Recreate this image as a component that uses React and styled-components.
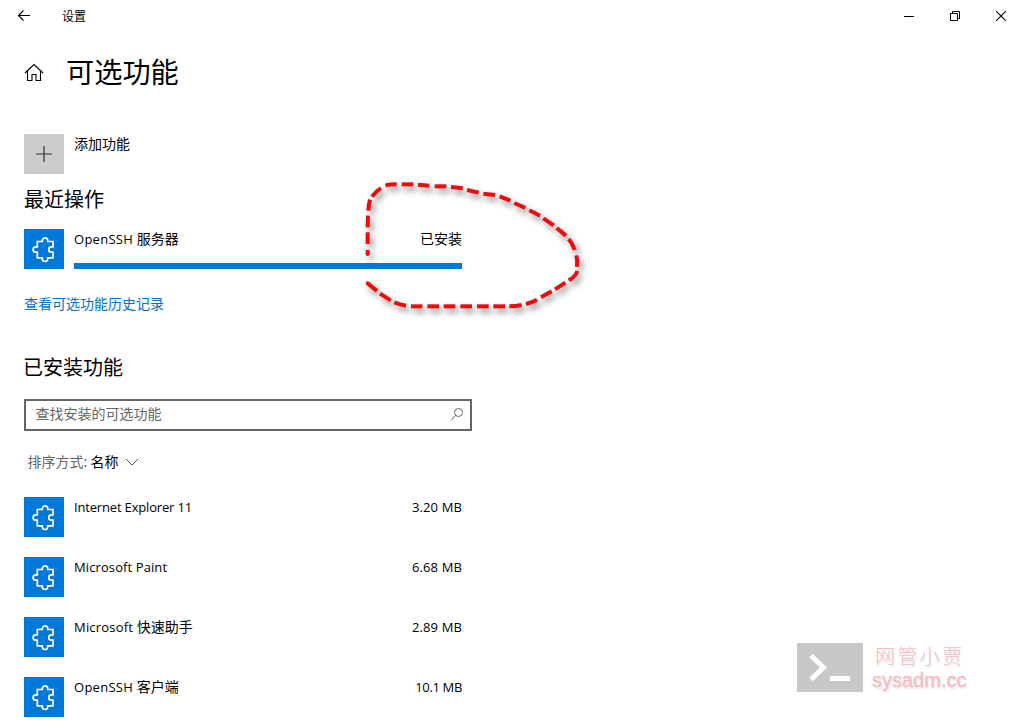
import React from 'react';
import styled, { createGlobalStyle } from 'styled-components';

const Global = createGlobalStyle`
  * { box-sizing: border-box; }
  body { margin: 0; background: #fff; color: #000; overflow: hidden;
    font-family: "Noto Sans CJK SC", sans-serif; }
`;
const Window = styled.div`
  position: relative; width: 1024px; height: 728px; overflow: hidden; background: #fff;
`;
const TitleBar = styled.header`
  display: flex; align-items: center; height: 32px; padding-left: 17px;
`;
const WindowTitle = styled.span`
  font-size: 12px; line-height: 32px; margin-left: 31px; flex: 1;
`;
const WindowButton = styled.span`
  width: 46px; height: 32px; display: flex; align-items: center; justify-content: center;
`;
const Heading = styled.div`
  display: flex; align-items: center; height: 80px; padding-left: 24px;
`;
const PageTitle = styled.h1`
  margin: 0 0 2px 22px; font-size: 28.2px; line-height: 40px; font-weight: 400;
`;
const Content = styled.main`
  width: 472px; padding: 22px 0 0 24px;
`;
const SectionTitle = styled.h2`
  margin: 0 0 0 ${p => p.$shift || 0}px; font-size: 20px; font-weight: 400; line-height: 30px;
  height: ${p => p.$height}px;
`;
const Row = styled.div`
  display: flex; height: ${p => p.$height || 60}px; padding-right: 10px;
`;
const Tile = styled.div`
  width: 40px; height: 40px; flex: none; background: ${p => p.$bg};
  svg { display: block; }
`;
const Details = styled.div`
  flex: 1; margin-left: 10px;
`;
const Line = styled.div`
  display: flex; justify-content: space-between; font-size: 14px; line-height: 18px; height: 20px;
  white-space: pre;
`;
const Latin = styled.span`
  font-family: "Open Sans", "Noto Sans", sans-serif; font-size: 13px; letter-spacing: ${p => p.$track || 0}px;
`;
const Progress = styled.div`
  height: 6px; margin-top: 14px; background: #0078d7;
`;
const HistoryLink = styled.a`
  display: block; font-size: 14px; line-height: 18px; height: 58px; color: #0070c8;
`;
const SearchBox = styled.div`
  display: flex; align-items: center; justify-content: space-between; width: 448px; height: 32px;
  border: 2px solid #666; padding: 0 7px 2px 9.5px; font-size: 14px; line-height: 20px; color: #666;
`;
const SearchText = styled.span`
  padding-bottom: 2px;
`;
const Sort = styled.div`
  display: flex; align-items: center; height: 66px; padding: 0 0 6px 3.5px; font-size: 14px; color: #666;
  white-space: pre;
  svg { margin-top: 2px; }
`;
const SortValue = styled.span`
  color: #000; margin: 0 8px 0 3px;
`;
const Annotation = styled.svg`
  position: absolute; left: 350px; top: 170px; overflow: visible;
  filter: drop-shadow(3px 4px 3px rgba(0,0,0,.5));
`;
const Watermark = styled.div`
  position: absolute; left: 797px; top: 643px; display: flex;
`;
const WatermarkText = styled.div`
  margin-left: 9px; color: #f5bcbe; text-shadow: 1px 2px 2px rgba(0,0,0,.12);
`;
const WatermarkName = styled.div`
  font-size: 20px; line-height: 26px; letter-spacing: 2.4px; margin-left: 3px; white-space: nowrap;
  font-weight: 300;
`;
const WatermarkSite = styled.div`
  font-family: "Liberation Sans", sans-serif; font-size: 20px; line-height: 22px; -webkit-text-stroke: .3px #f5bcbe;
`;

const PuzzleTile = () => (
  <Tile $bg="#0078d7">
    <svg width="40" height="40" fill="none" stroke="#fff" strokeWidth="1.7">
      <path d="M13.3 12.5H18.3V11.5A2.7 2.7 0 0 1 23.7 11.5V12.5H29V17.8H27.4A2.7 2.7 0 0 0 27.4 23.2H29V28.8H23.7V29.8A2.7 2.7 0 0 1 18.3 29.8V28.8H13.3V23.2H11.8A2.7 2.7 0 0 1 11.8 17.8H13.3Z" />
    </svg>
  </Tile>
);

const features = [
  { latin: 'Internet Explorer 11', track: -0.17, size: '3.20 MB', sizeTrack: 0.12 },
  { latin: 'Microsoft Paint', track: 0.1, size: '6.68 MB', sizeTrack: 0.12 },
  { latin: 'Microsoft ', track: 0.2, cjk: '快速助手', size: '2.89 MB', sizeTrack: 0.12 },
  { latin: 'OpenSSH ', track: 0.27, cjk: '客户端', size: '10.1 MB', sizeTrack: -0.35 },
];

const dashes = [
  'M53 253V240', 'M53 222V187', 'M53 172L54 137', 'M55 122Q56 103 60 89', 'M66 80Q77 64 93 55',
  'M106 46Q120 43 140 43', 'M155 43H190', 'M204 44L238 47', 'M254 49L289 49', 'M303 51L338 55',
  'M351 60L386 68', 'M400 71L435 75', 'M449 79L481 92', 'M493 99L526 114', 'M538 121L570 137',
  'M580 145L611 166', 'M620 174L648 197', 'M656 207Q668 221 674 240', 'M679 256Q683 273 681 290',
  'M682 303Q677 320 656 331', 'M646 338L615 358', 'M605 364L573 382', 'M561 389Q545 398 528 402',
  'M515 405Q498 409 478 409', 'M465 409H430', 'M416 409H381', 'M366 409H331', 'M316 409H281',
  'M267 409H232', 'M217 409H183', 'M168 407Q150 404 133 397', 'M122 391L90 371', 'M81 363L53 340',
];

export default function App() {
  return (
    <Window>
      <Global />
      <TitleBar>
        <svg width="14" height="32" fill="none" stroke="#000" strokeWidth="1.1"><path d="M1.5 15.5H13M6.5 10.5L1.5 15.5L6.5 20.5" /></svg>
        <WindowTitle>设置</WindowTitle>
        <WindowButton><svg width="10" height="10" stroke="#000"><path d="M0 5.5H10" /></svg></WindowButton>
        <WindowButton><svg width="10" height="10" fill="none" stroke="#000"><path d="M.5 2.5H7.5V9.5H.5ZM2.5 2.5V.5H9.5V7.5H7.5" /></svg></WindowButton>
        <WindowButton><svg width="10" height="10" stroke="#000" strokeWidth="1.1"><path d="M0 0L10 10M10 0L0 10" /></svg></WindowButton>
      </TitleBar>
      <Heading>
        <svg width="20" height="20" fill="none" stroke="#000" strokeWidth="1.1"><path d="M1 11L10 2.5L19 11M3.5 9V18.5H8V12.5H12V18.5H16.5V9" /></svg>
        <PageTitle>可选功能</PageTitle>
      </Heading>
      <Content>
        <Row $height={50}>
          <Tile $bg="#ccc"><svg width="40" height="40" stroke="#333" strokeWidth="1.2"><path d="M12 20H28M20 12V28" /></svg></Tile>
          <Details><Line>添加功能</Line></Details>
        </Row>
        <SectionTitle $height={45}>最近操作</SectionTitle>
        <Row $height={65}>
          <PuzzleTile />
          <Details>
            <Line><span><Latin $track={0.27}>OpenSSH </Latin>服务器</span><span>已安装</span></Line>
            <Progress />
          </Details>
        </Row>
        <HistoryLink>查看可选功能历史记录</HistoryLink>
        <SectionTitle $height={47} $shift={-1}>已安装功能</SectionTitle>
        <SearchBox>
          <SearchText>查找安装的可选功能</SearchText>
          <svg width="12" height="14" fill="none" stroke="#666"><circle cx="7.5" cy="5.5" r="4" /><path d="M4.6 8.3L0 13.5" /></svg>
        </SearchBox>
        <Sort>
          排序方式:<SortValue>名称</SortValue>
          <svg width="12" height="8" fill="none" stroke="#555"><path d="M0 1L6 7L12 1" /></svg>
        </Sort>
        {features.map(f => (
          <Row key={f.latin}>
            <PuzzleTile />
            <Details>
              <Line>
                <span><Latin $track={f.track}>{f.latin}</Latin>{f.cjk}</span>
                <span><Latin $track={f.sizeTrack}>{f.size}</Latin></span>
              </Line>
            </Details>
          </Row>
        ))}
      </Content>
      <Annotation width="250" height="150" viewBox="0 0 750 450" fill="none" stroke="#f00a0e" strokeWidth="12">
        {dashes.map(d => <path key={d} d={d} />)}
        <circle cx="53" cy="252" r="4" fill="#f00a0e" strokeWidth="4" />
        <circle cx="53" cy="340" r="4" fill="#f00a0e" strokeWidth="4" />
      </Annotation>
      <Watermark>
        <svg width="66" height="49"><path fill="#c8c8c8" d="M0 0H66V49H0Z" /><path d="M14 12.5L26.5 24.5L14 36.5M33 35.5H53" fill="none" stroke="#fff" strokeWidth="5" /></svg>
        <WatermarkText>
          <WatermarkName>网管小贾</WatermarkName>
          <WatermarkSite>sysadm.cc</WatermarkSite>
        </WatermarkText>
      </Watermark>
    </Window>
  );
}
